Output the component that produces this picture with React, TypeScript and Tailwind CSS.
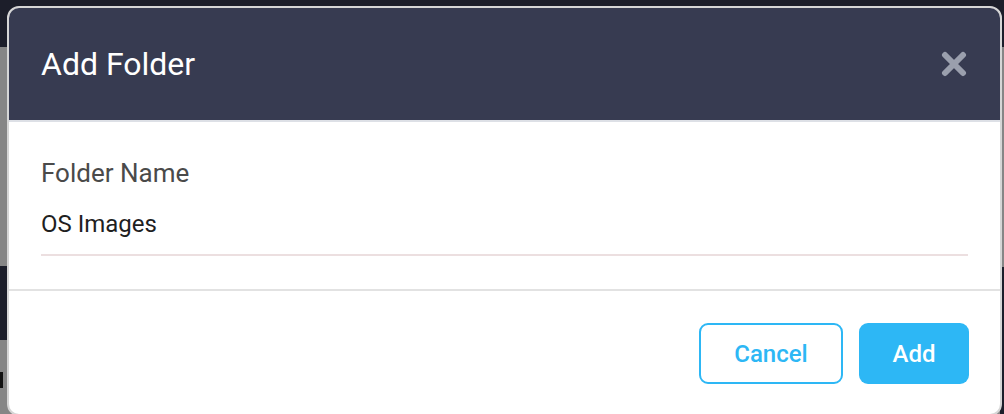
import React from "react";

function CloseIcon() {
  return (
    <svg width="26" height="26" viewBox="0 0 26 26" aria-hidden="true">
      <path
        d="M4 4 L22 22 M22 4 L4 22"
        stroke="#9a9fad"
        strokeWidth="6"
        strokeLinecap="round"
        fill="none"
      />
    </svg>
  );
}

export default function App() {
  return (
    <div
      className="relative w-[1004px] h-[414px] overflow-hidden bg-[#868686]"
      style={{ fontFamily: "Roboto, 'Liberation Sans', sans-serif" }}
    >
      {/* page behind the overlay */}
      <div className="absolute left-0 top-0 w-full h-[47px] bg-[#1c1e2a]" />
      <div className="absolute left-0 top-[266px] w-[8px] h-[74px] bg-[#1c1e2a]" />
      <div className="absolute left-0 top-[372px] w-[3px] h-[16px] bg-[#111]" />
      <div className="absolute right-0 top-[267px] w-[4px] h-[150px] bg-[#1c1e2a]" />

      {/* dialog */}
      <div className="absolute left-[7px] top-[6px] w-[995px] h-[410px] rounded-[12px] border-2 border-[#d6d6d6] bg-white overflow-hidden flex flex-col">
        <div className="h-[114px] shrink-0 bg-[#373b51] border-b-2 border-[#dde0e6] flex items-center justify-between pl-[32px] pr-[33px]">
          <h2 className="text-[32px] leading-none text-white font-normal">Add Folder</h2>
          <button aria-label="Close" className="flex items-center justify-center">
            <CloseIcon />
          </button>
        </div>

        <div className="px-[32px] pt-[36px] pb-[33px] border-b-2 border-[#e2e2e2]">
          <label className="block text-[26px] leading-[30px] text-[#4a4a4a]">Folder Name</label>
          <div className="mt-[22px] pb-[16px] border-b-2 border-[#ecdfe0] text-[24px] leading-[28px] text-[#1f1f1f]">
            OS Images
          </div>
        </div>

        <div className="flex justify-end gap-[16px] pt-[32px] pr-[31px]">
          <button className="w-[144px] h-[61px] rounded-[9px] border-2 border-[#2db7f5] text-[#2db7f5] text-[24px] font-medium bg-white">
            Cancel
          </button>
          <button className="w-[110px] h-[61px] rounded-[9px] bg-[#2db7f5] text-white text-[24px] font-medium">
            Add
          </button>
        </div>
      </div>
    </div>
  );
}
